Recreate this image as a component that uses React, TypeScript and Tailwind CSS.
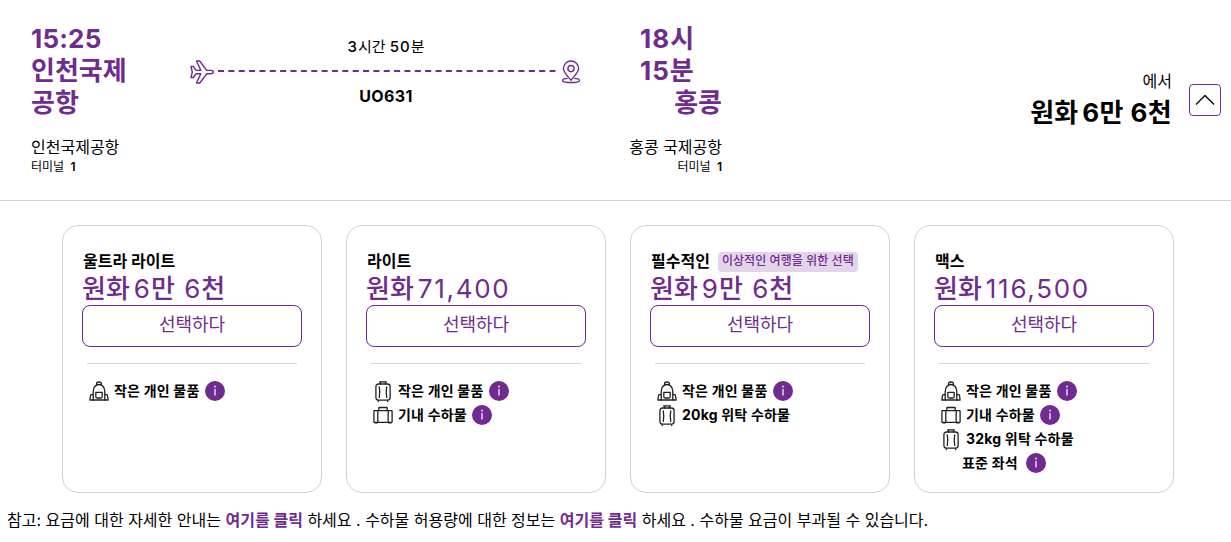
import React from "react";

type IconName = "backpack" | "suitcase" | "briefcase";

interface Feature {
  label: string;
  icon?: IconName;
  info?: boolean;
}

interface Fare {
  name: string;
  currency: string;
  price: string;
  badge?: string;
  features: Feature[];
}

const fares: Fare[] = [
  {
    name: "울트라 라이트",
    currency: "원화",
    price: "6만 6천",
    features: [{ label: "작은 개인 물품", icon: "backpack", info: true }],
  },
  {
    name: "라이트",
    currency: "원화",
    price: "71,400",
    features: [
      { label: "작은 개인 물품", icon: "suitcase", info: true },
      { label: "기내 수하물", icon: "briefcase", info: true },
    ],
  },
  {
    name: "필수적인",
    currency: "원화",
    price: "9만 6천",
    badge: "이상적인 여행을 위한 선택",
    features: [
      { label: "작은 개인 물품", icon: "backpack", info: true },
      { label: "20kg 위탁 수하물", icon: "suitcase" },
    ],
  },
  {
    name: "맥스",
    currency: "원화",
    price: "116,500",
    features: [
      { label: "작은 개인 물품", icon: "backpack", info: true },
      { label: "기내 수하물", icon: "briefcase", info: true },
      { label: "32kg 위탁 수하물", icon: "suitcase" },
      { label: "표준 좌석", info: true },
    ],
  },
];

const hangul = /[가-힣]/;

const FeatureIcon = ({ name }: { name: IconName }) => (
  <svg width="22" height="22" viewBox="0 0 22 22" fill="none" stroke="#222" strokeWidth="1.3" strokeLinejoin="round" strokeLinecap="round" className="mt-0.5 shrink-0">
    {name === "backpack" && (
      <>
        <path d="M8.6 3.8v-.9A1.900 1.900 0 0 1 10.500 1h1a1.900 1.900 0 0 1 1.900 1.900v.9" />
        <path d="M5.200 19V10.500C5.200 6.500 7.700 3.500 11 3.500s5.800 3 5.800 7V19z" />
        <path d="M5.200 13.600H3.700a1.400 1.400 0 0 0-1.300 1.400L1.900 19h3.300M16.800 13.600h1.500a1.400 1.400 0 0 1 1.300 1.400l.5 4h-3.300" />
        <path d="M7.800 11.400h6.400v4a1.600 1.600 0 0 1-1.600 1.600H9.400a1.600 1.600 0 0 1-1.600-1.600z" />
      </>
    )}
    {name === "suitcase" && (
      <>
        <path d="M8.500 3V.9h5V3M7.600.9h6.800" />
        <rect x="3.900" y="3" width="14.200" height="16.200" rx="2.600" />
        <path d="M7.300 5.800c.6 3.500.6 7 0 10.500M14.700 5.800c-.6 3.500-.6 7 0 10.500M6.300 19.800v.8M15.700 19.800v.8" />
      </>
    )}
    {name === "briefcase" && (
      <>
        <path d="M6.900 5.600V2.500h8.200v3.100" />
        <rect x="1.900" y="5.600" width="18.200" height="11.800" rx="0.600" />
        <path d="M5.800 5.600v11.800M16.200 5.600v11.800M3 17.900h2.300M16.700 17.900H19" />
      </>
    )}
  </svg>
);

const InfoIcon = () => (
  <svg width="20" height="20" viewBox="0 0 20 20" className="shrink-0">
    <circle cx="10" cy="10" r="10" fill="#702b91" />
    <path d="M10 8v6.600" stroke="#d3bcde" strokeWidth="1.800" />
    <circle cx="10" cy="5.700" r="1.100" fill="#d3bcde" />
  </svg>
);

const PlaneIcon = () => (
  <svg width="24" height="24" viewBox="0 0 24 24" fill="none" stroke="#702b91" strokeWidth="1.400" strokeLinejoin="round" className="shrink-0">
    <path d="M1 6.500h2.200l3 3.900h4.600L6.500 1h3.200l7 9.400h4.200c1.400 0 2.400.8 2.400 1.700s-1 1.700-2.400 1.700h-4.200l-7 9.200H6.500l4.300-9.200H6.200l-3 3.700H1l1.300-5.400z" />
  </svg>
);

const PinIcon = () => (
  <svg width="20" height="24" viewBox="0 0 20 24" fill="none" stroke="#702b91" strokeWidth="1.400" strokeLinejoin="round" className="ml-px shrink-0">
    <path d="M10 20.300C7.200 16.700 2.400 12.400 2.400 8.600a7.600 7.600 0 0 1 15.200 0c0 3.800-4.800 8.100-7.600 11.700z" />
    <circle cx="10" cy="8.600" r="3.100" />
    <path d="M6.700 18.400c-3 .2-5.200.9-5.200 2 0 1.300 3.600 2.100 8.500 2.100s8.500-.8 8.500-2.100c0-1.100-2.200-1.800-5.200-2" />
  </svg>
);

const FlightHeader = () => (
  <header className="flex h-[201px] rounded-tl-[10px] border-b border-[#d2d2d2] pt-[23px] pl-[30px]">
    <div className="w-[100px] pl-px">
      <div className="text-[26px] leading-8 font-bold text-[#702b91]">
        <p className="tracking-[0.2px]">15:25</p>
        <p>인천국제 공항</p>
      </div>
      <p className="mt-4 text-base leading-6 whitespace-nowrap">인천국제공항</p>
      <p className="text-xs leading-4 [word-spacing:3px]">
        터미널 <span className="font-semibold">1</span>
      </p>
    </div>

    <div className="ml-[60px] w-[392px] pt-3 text-center">
      <p className="text-[15px] leading-6">
        <span className="font-medium tracking-[1px]">3</span>시간 <span className="font-medium tracking-[1px]">50</span>분
      </p>
      <div className="mt-px flex h-6 items-center">
        <PlaneIcon />
        <svg width="338" height="2" className="mx-1 mb-0.5 shrink-0">
          <path d="M0 1h338" stroke="#702b91" strokeWidth="2" strokeDasharray="6 4.360" />
        </svg>
        <PinIcon />
      </div>
      <p className="text-base leading-6 font-bold tracking-[0.4px]">UO631</p>
    </div>

    <div className="ml-10 w-[100px]">
      <div className="text-[26px] leading-8 font-bold text-[#702b91]">
        <p className="ml-[18px] w-[60px] tracking-[1px]">18시 15분</p>
        <p className="text-right">홍콩</p>
      </div>
      <p className="mt-4 text-right text-base leading-6 whitespace-nowrap">홍콩 국제공항</p>
      <p className="text-right text-xs leading-4 [word-spacing:3px]">
        터미널 <span className="font-semibold">1</span>
      </p>
    </div>

    <div className="ml-auto flex pr-[10px]">
      <div className="mr-[17px] pt-[46px] text-right">
        <p className="text-base leading-6">에서</p>
        <p className="text-[26px] leading-10 font-bold">
          원화 <span className="-ml-[2px] tracking-[0.4px]">6만 6천</span>
        </p>
      </div>
      <button aria-label="접기" className="mt-[61px] flex size-8 items-center justify-center rounded border border-[#702b91]">
        <svg width="20" height="12" viewBox="0 0 20 12" fill="none" stroke="#111" strokeWidth="1.500">
          <path d="M1 10.500 10 1.500l9 9" />
        </svg>
      </button>
    </div>
  </header>
);

const FareCard = ({ fare }: { fare: Fare }) => (
  <div className="h-[268px] w-[260px] rounded-2xl border border-[#d2d2d2] px-[19px] pt-[23px]">
    <div className="flex h-6 items-center pl-px">
      <h3 className="text-base leading-6 font-bold">{fare.name}</h3>
      {fare.badge && <span className="mt-0.5 ml-2 h-5 rounded bg-[#e2d5e9] px-1 text-xs leading-[17px] font-medium tracking-[0.06px] whitespace-nowrap text-[#702b91]">{fare.badge}</span>}
    </div>
    <p className="flex h-8 gap-1 text-[26px] leading-[31px] whitespace-nowrap text-[#702b91]">
      <span className="font-medium">{fare.currency}</span>
      <span className={hangul.test(fare.price) ? "tracking-[1px]" : "tracking-[1.7px]"}>
        {fare.price.split(/([가-힣])/).map((part, index) => (
          <span key={index} className={hangul.test(part) ? "font-medium" : ""}>
            {part}
          </span>
        ))}
      </span>
    </p>
    <button className="h-[42px] w-full rounded-lg border border-[#702b91] pb-0.5 text-lg leading-6 text-[#702b91]">선택하다</button>
    <hr className="mx-[5px] mt-4 border-[#d2d2d2]" />
    <ul className="mt-[15px] ml-[6px]">
      {fare.features.map((feature) => (
        <li key={feature.label} className="flex h-6 items-center text-sm font-bold tracking-[0.2px]">
          {feature.icon && <FeatureIcon name={feature.icon} />}
          <span className={feature.icon ? "ml-1" : "mr-[3px] ml-[22px]"}>{feature.label}</span>
          {feature.info && (
            <span className="ml-[5px]">
              <InfoIcon />
            </span>
          )}
        </li>
      ))}
    </ul>
  </div>
);

const App = () => {
  return (
    <div className="h-[542px] overflow-hidden bg-white font-['Inter','Noto_Sans_CJK_KR',sans-serif] text-black">
      <FlightHeader />
      <main className="mt-6 ml-[62px] flex gap-6">
        {fares.map((fare) => (
          <FareCard key={fare.name} fare={fare} />
        ))}
      </main>
      <p className="mt-[15px] ml-[7px] text-base leading-6 whitespace-nowrap">
        참고: 요금에 대한 자세한 안내는 <a className="font-bold text-[#702b91]">여기를 클릭</a> 하세요 . 수하물 허용량에 대한 정보는 <a className="font-bold text-[#702b91]">여기를 클릭</a> 하세요 . 수하물 요금이 부과될 수 있습니다.
      </p>
    </div>
  );
};

export default App;
